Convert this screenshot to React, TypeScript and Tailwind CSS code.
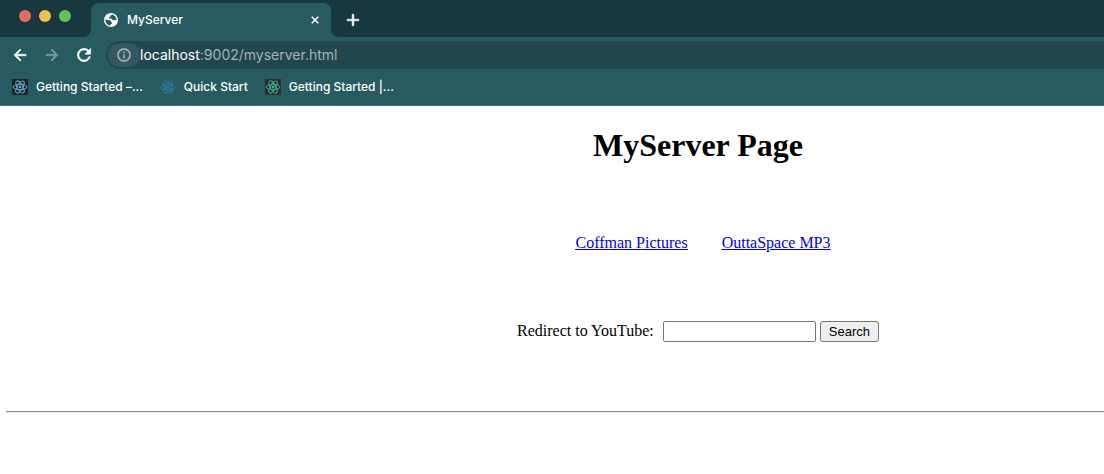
import React from "react";

function Glyph({ d, className, weight }: { d: string; className: string; weight: number }) {
  return (
    <svg
      viewBox="0 0 24 24"
      className={className}
      fill="currentColor"
      stroke="currentColor"
      strokeWidth={weight}
      aria-hidden="true"
    >
      <path d={d} />
    </svg>
  );
}

const BACK = "M20 11H7.83l5.59-5.59L12 4l-8 8 8 8 1.41-1.41L7.83 13H20v-2z";
const FORWARD = "M12 4l-1.41 1.41L16.17 11H4v2h12.17l-5.58 5.59L12 20l8-8z";
const RELOAD =
  "M17.65 6.35A7.958 7.958 0 0 0 12 4c-4.42 0-7.99 3.58-7.99 8s3.57 8 7.99 8c3.73 0 6.84-2.55 7.73-6h-2.08A5.99 5.99 0 0 1 12 18c-3.31 0-6-2.69-6-6s2.69-6 6-6c1.66 0 3.14.69 4.22 1.78L13 11h7V4l-2.35 2.35z";
const CLOSE =
  "M19 6.41L17.59 5 12 10.59 6.41 5 5 6.41 10.59 12 5 17.59 6.41 19 12 13.41 17.59 19 19 17.59 13.41 12z";
const ADD = "M19 13h-6v6h-2v-6H5v-2h6V5h2v6h6v2z";
const INFO =
  "M11 7h2v2h-2zm0 4h2v6h-2zm1-9C6.48 2 2 6.48 2 12s4.48 10 10 10 10-4.48 10-10S17.52 2 12 2zm0 18c-4.41 0-8-3.59-8-8s3.59-8 8-8 8 3.59 8 8-3.59 8-8 8z";

function Globe() {
  return (
    <svg viewBox="0 0 14 14" className="size-3.5 shrink-0" aria-hidden="true">
      <circle cx="7" cy="7" r="7" fill="#ffffff" />
      <path
        d="M8.2 1.5C7.2 2 6.4 2.6 6.5 3.5C5.1 3.7 4.8 4.4 5.1 5.6C6.4 5.7 7.6 5.4 8.3 6.4C8.7 7.4 9.8 7.5 10.6 7.2C11.4 6.9 12 6.8 12.6 7C12.5 4.4 10.7 2.1 8.2 1.5ZM1.4 6.4C1.3 9.6 3.5 12.3 6.4 12.6C6.2 11.7 6.7 11.1 7.6 10.8C8.3 10.4 8.2 9.5 7.5 9.2C6.9 8.9 6.9 8.1 6.2 7.5C5.2 6.7 3.2 7 1.4 6.4Z"
        fill="#275a61"
      />
    </svg>
  );
}

function Atom({ color, tile, square }: { color: string; tile?: string; square?: boolean }) {
  return (
    <svg viewBox="0 0 16 16" className="size-4 shrink-0" aria-hidden="true">
      {tile && <rect width="16" height="16" rx={square ? 0 : 1} fill={tile} />}
      <g fill="none" stroke={color} strokeWidth="0.9">
        <ellipse cx="8" cy="8" rx="6.9" ry="2.7" />
        <ellipse cx="8" cy="8" rx="6.9" ry="2.7" transform="rotate(60 8 8)" />
        <ellipse cx="8" cy="8" rx="6.9" ry="2.7" transform="rotate(120 8 8)" />
      </g>
      {square ? (
        <rect x="6.6" y="6.6" width="2.8" height="2.8" fill={color} />
      ) : (
        <circle cx="8" cy="8" r="1.3" fill={color} />
      )}
    </svg>
  );
}

function Bookmark({ label, children }: { label: string; children: React.ReactNode }) {
  return (
    <a href="#" className="flex items-center gap-2 whitespace-nowrap">
      {children}
      {label}
    </a>
  );
}

export default function App() {
  return (
    <div className="min-h-screen overflow-x-hidden bg-white">
      <header className="border-b border-[#48777d] bg-[#275a61] font-['Inter',sans-serif] text-white">
        <div className="flex h-[37px] bg-[#275a61]">
          <div className="flex w-[91px] shrink-0 gap-2 rounded-br-lg bg-[#16383e] pt-2.5 pl-[19px]">
            <span className="size-3 rounded-full bg-[#ed6a5f]" />
            <span className="size-3 rounded-full bg-[#f5bf4f]" />
            <span className="size-3 rounded-full bg-[#61c554]" />
          </div>
          <div className="w-60 shrink-0 bg-[#16383e] pt-[3px]">
            <div className="flex h-[34px] items-center rounded-t-lg bg-[#275a61] pr-2.5 pl-[13px]">
              <Globe />
              <span className="ml-[9px] flex-1 text-xs font-medium">MyServer</span>
              <button aria-label="Close tab">
                <Glyph d={CLOSE} className="size-3" weight={1} />
              </button>
            </div>
          </div>
          <div className="flex flex-1 items-center rounded-bl-lg bg-[#16383e] pt-[3px] pl-3">
            <button aria-label="New tab">
              <Glyph d={ADD} className="size-5" weight={0.6} />
            </button>
          </div>
        </div>

        <div className="flex h-9 items-center pl-[11px]">
          <button aria-label="Back">
            <Glyph d={BACK} className="size-[18px]" weight={0.8} />
          </button>
          <button aria-label="Forward" className="ml-3.5 text-[#7b9da1]">
            <Glyph d={FORWARD} className="size-[18px]" weight={0.6} />
          </button>
          <button aria-label="Reload" className="ml-[13px]">
            <Glyph d={RELOAD} className="size-5" weight={0.6} />
          </button>
          <div className="ml-3 flex h-7 flex-1 items-center rounded-l-full bg-[#20474e] pl-0.5">
            <button
              aria-label="Site information"
              className="flex h-6 w-8 items-center justify-center rounded-full bg-[#355860] text-[#a9b8bb]"
            >
              <Glyph d={INFO} className="size-4" weight={0.4} />
            </button>
            <span className="text-sm text-[#a3b4b7]">
              <span className="text-white">localhost</span>:9002/myserver.html
            </span>
          </div>
        </div>

        <nav aria-label="Bookmarks" className="flex h-8 items-start gap-[17px] pt-1.5 pl-3 text-xs font-medium">
          <Bookmark label="Getting Started –...">
            <Atom color="#61b5d0" tile="#20232a" />
          </Bookmark>
          <Bookmark label="Quick Start">
            <Atom color="#2e7ba4" />
          </Bookmark>
          <Bookmark label="Getting Started |...">
            <Atom color="#41b08d" tile="#2b2d36" square />
          </Bookmark>
        </nav>
      </header>

      <main className="pt-[19px] font-['Liberation_Serif',serif] text-base text-black">
        <div className="flex flex-col items-center pl-[292px]">
          <h1 className="text-[32px] leading-10 font-bold">MyServer Page</h1>
          <div className="mt-[66px] flex gap-[34px] pl-2.5 text-[#0000ee] underline">
            <a href="#coffman">Coffman Pictures</a>
            <a href="#outtaspace">OuttaSpace MP3</a>
          </div>
          <form className="mt-16 flex items-center" onSubmit={(e) => e.preventDefault()}>
            <label htmlFor="query">Redirect to YouTube:</label>
            <input
              id="query"
              type="text"
              className="ml-[9px] h-[21px] w-[153px] rounded-[2px] border border-[#767676] bg-white px-1 font-['Liberation_Sans',sans-serif] text-[13px]"
            />
            <button
              type="submit"
              className="ml-1 h-[21px] rounded-[3px] border border-[#767676] bg-[#efefef] px-2 font-['Liberation_Sans',sans-serif] text-[13px] leading-[19px]"
            >
              Search
            </button>
          </form>
        </div>
        <hr className="mt-[68px] ml-1.5 h-0.5 border-t border-b border-t-[#8c8c8c] border-b-[#ededed]" />
      </main>
    </div>
  );
}
